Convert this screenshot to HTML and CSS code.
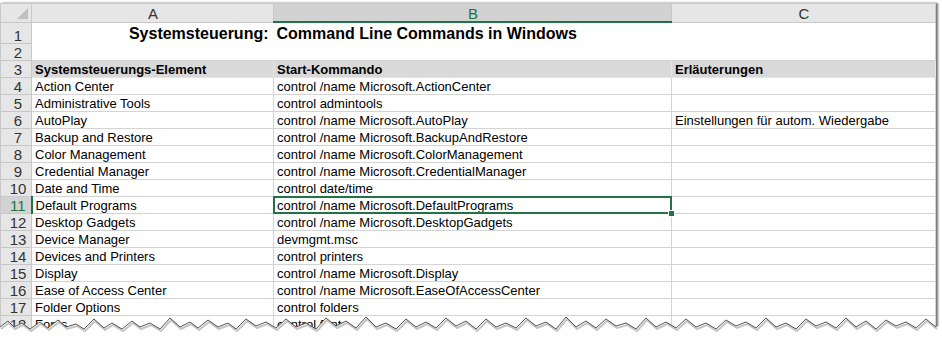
FILE: index.html
```html
<!DOCTYPE html>
<html lang="de">
<head>
    <meta charset="UTF-8">
    <title>Systemsteuerung: Command Line Commands in Windows</title>
    <link rel="stylesheet" href="styles.css">
</head>
<body>

<div class="sheet">
    <table class="grid">
        <colgroup>
            <col class="c-hdr">
            <col class="c-a">
            <col class="c-b">
            <col class="c-c">
        </colgroup>
        <thead>
            <tr class="col-head">
                <th class="corner"><span class="tri"></span></th>
                <th>A</th>
                <th class="sel">B</th>
                <th>C</th>
            </tr>
        </thead>
        <tbody>
            <tr class="r-title blank">
                <th>1</th>
                <td class="title-a">Systemsteuerung:</td>
                <td class="title-b">Command Line Commands in Windows</td>
                <td></td>
            </tr>
            <tr class="r-empty blank">
                <th>2</th>
                <td></td>
                <td></td>
                <td></td>
            </tr>
            <tr class="r-head">
                <th>3</th>
                <td>Systemsteuerungs-Element</td>
                <td>Start-Kommando</td>
                <td>Erläuterungen</td>
            </tr>
            <tr><th>4</th><td>Action Center</td><td>control /name Microsoft.ActionCenter</td><td></td></tr>
            <tr><th>5</th><td>Administrative Tools</td><td>control admintools</td><td></td></tr>
            <tr><th>6</th><td>AutoPlay</td><td>control /name Microsoft.AutoPlay</td><td>Einstellungen für autom. Wiedergabe</td></tr>
            <tr><th>7</th><td>Backup and Restore</td><td>control /name Microsoft.BackupAndRestore</td><td></td></tr>
            <tr><th>8</th><td>Color Management</td><td>control /name Microsoft.ColorManagement</td><td></td></tr>
            <tr><th>9</th><td>Credential Manager</td><td>control /name Microsoft.CredentialManager</td><td></td></tr>
            <tr><th>10</th><td>Date and Time</td><td>control date/time</td><td></td></tr>
            <tr class="r-sel"><th>11</th><td>Default Programs</td><td class="active">control /name Microsoft.DefaultPrograms</td><td></td></tr>
            <tr><th>12</th><td>Desktop Gadgets</td><td>control /name Microsoft.DesktopGadgets</td><td></td></tr>
            <tr><th>13</th><td>Device Manager</td><td>devmgmt.msc</td><td></td></tr>
            <tr><th>14</th><td>Devices and Printers</td><td>control printers</td><td></td></tr>
            <tr><th>15</th><td>Display</td><td>control /name Microsoft.Display</td><td></td></tr>
            <tr><th>16</th><td>Ease of Access Center</td><td>control /name Microsoft.EaseOfAccessCenter</td><td></td></tr>
            <tr><th>17</th><td>Folder Options</td><td>control folders</td><td></td></tr>
            <tr><th>18</th><td>Fonts</td><td>control fonts</td><td></td></tr>
        </tbody>
    </table>

    <!-- abgerissene Kante unten -->
    <svg class="tear" width="942" height="30" viewBox="0 0 942 30">
        <polygon fill="#fff" points="0,20 8,14 14,20 22,16 30,22 40,15 48,21 58,13 66,20 76,17 84,22 94,12 104,21 112,16 122,22 132,14 140,20 150,16 160,22 170,11 180,20 190,15 198,21 208,13 218,20 228,16 236,22 246,12 256,19 266,15 276,21 286,12 296,20 306,16 316,22 326,11 336,19 346,14 356,21 366,10 376,20 386,16 396,22 406,12 416,20 426,15 436,21 446,11 456,19 466,14 476,22 486,12 496,20 506,16 516,21 526,11 536,19 546,15 556,22 566,10 576,20 586,14 596,21 606,12 616,19 626,16 636,22 646,11 656,20 666,15 676,21 686,12 696,20 706,16 716,22 726,13 736,19 746,15 756,21 766,11 776,20 786,16 796,22 806,12 816,19 826,15 836,21 846,11 856,20 866,14 876,22 886,13 896,19 906,15 916,21 926,12 936,20 942,18 942,30 0,30"/>
        <polyline fill="none" stroke="#c4c4c4" stroke-width="2" transform="translate(1,2)" points="0,20 8,14 14,20 22,16 30,22 40,15 48,21 58,13 66,20 76,17 84,22 94,12 104,21 112,16 122,22 132,14 140,20 150,16 160,22 170,11 180,20 190,15 198,21 208,13 218,20 228,16 236,22 246,12 256,19 266,15 276,21 286,12 296,20 306,16 316,22 326,11 336,19 346,14 356,21 366,10 376,20 386,16 396,22 406,12 416,20 426,15 436,21 446,11 456,19 466,14 476,22 486,12 496,20 506,16 516,21 526,11 536,19 546,15 556,22 566,10 576,20 586,14 596,21 606,12 616,19 626,16 636,22 646,11 656,20 666,15 676,21 686,12 696,20 706,16 716,22 726,13 736,19 746,15 756,21 766,11 776,20 786,16 796,22 806,12 816,19 826,15 836,21 846,11 856,20 866,14 876,22 886,13 896,19 906,15 916,21 926,12 936,20"/>
        <polyline fill="none" stroke="#555" stroke-width="1" points="0,20 8,14 14,20 22,16 30,22 40,15 48,21 58,13 66,20 76,17 84,22 94,12 104,21 112,16 122,22 132,14 140,20 150,16 160,22 170,11 180,20 190,15 198,21 208,13 218,20 228,16 236,22 246,12 256,19 266,15 276,21 286,12 296,20 306,16 316,22 326,11 336,19 346,14 356,21 366,10 376,20 386,16 396,22 406,12 416,20 426,15 436,21 446,11 456,19 466,14 476,22 486,12 496,20 506,16 516,21 526,11 536,19 546,15 556,22 566,10 576,20 586,14 596,21 606,12 616,19 626,16 636,22 646,11 656,20 666,15 676,21 686,12 696,20 706,16 716,22 726,13 736,19 746,15 756,21 766,11 776,20 786,16 796,22 806,12 816,19 826,15 836,21 846,11 856,20 866,14 876,22 886,13 896,19 906,15 916,21 926,12 936,20"/>
    </svg>
</div>

</body>
</html>
```

FILE: styles.css
```css
body {
    margin: 0;
    background-color: #fff;
    font-family: "Liberation Sans", Arial, sans-serif;
}
.sheet {
    position: relative;
    width: 942px;
    height: 338px;
    padding-top: 3px;
    box-sizing: border-box;
    overflow: hidden;
}
.grid {
    border-collapse: collapse;
    table-layout: fixed;
    width: 936px;
    font-size: 13px;
    color: #000;
    box-shadow: 2px 0 2px rgba(0, 0, 0, 0.55);
}
.c-hdr { width: 31px; }
.c-a { width: 242px; }
.c-b { width: 398px; }
.c-c { width: 264px; }

th, td {
    border: 1px solid #d4d4d4;
    height: 15px;
    padding: 1px 2px 0 3px;
    line-height: 15px;
    white-space: nowrap;
    overflow: hidden;
    vertical-align: bottom;
    text-align: left;
    font-weight: normal;
}

/* Spaltenköpfe */
.col-head th {
    height: 16px;
    background-color: #e6e6e6;
    border-color: #c8c8c8;
    text-align: center;
    font-size: 15px;
    color: #333;
    vertical-align: middle;
}
.col-head th.sel {
    background-color: #d2d2d2;
    color: #217346;
    border-bottom: 2px solid #217346;
}
.corner {
    position: relative;
}
.tri {
    position: absolute;
    right: 3px;
    bottom: 3px;
    width: 0;
    height: 0;
    border-left: 11px solid transparent;
    border-bottom: 11px solid #c0c0c0;
}

/* Zeilenköpfe */
tbody th {
    background-color: #e6e6e6;
    border-color: #c8c8c8;
    text-align: center;
    font-size: 15px;
    color: #333;
    padding: 1px 0 0 4px;
}
.r-sel th {
    background-color: #d2d2d2;
    color: #217346;
    border-right: 2px solid #217346;
}

/* Titelzeilen ohne Gitter */
.r-title td {
    height: 19px;
    border-bottom-style: hidden;
}
.blank td + td {
    border-left-style: hidden;
}
.title-a,
.title-b {
    font-size: 16px;
    font-weight: bold;
    line-height: 19px;
}
.title-a {
    text-align: right;
    padding-right: 5px;
}

.r-head td {
    background-color: #d9d9d9;
    border-color: #e4e4e4;
    font-weight: bold;
}

/* aktive Zelle */
.active {
    position: relative;
    overflow: visible;
}
.active::after {
    content: "";
    position: absolute;
    left: -1px;
    top: -1px;
    right: -1px;
    bottom: -1px;
    border: 2px solid #217346;
}
.active::before {
    content: "";
    position: absolute;
    right: -4px;
    bottom: -4px;
    width: 5px;
    height: 5px;
    background-color: #217346;
    border: 1px solid #fff;
    z-index: 1;
}

.tear {
    position: absolute;
    left: 0;
    top: 307px;
}
```
